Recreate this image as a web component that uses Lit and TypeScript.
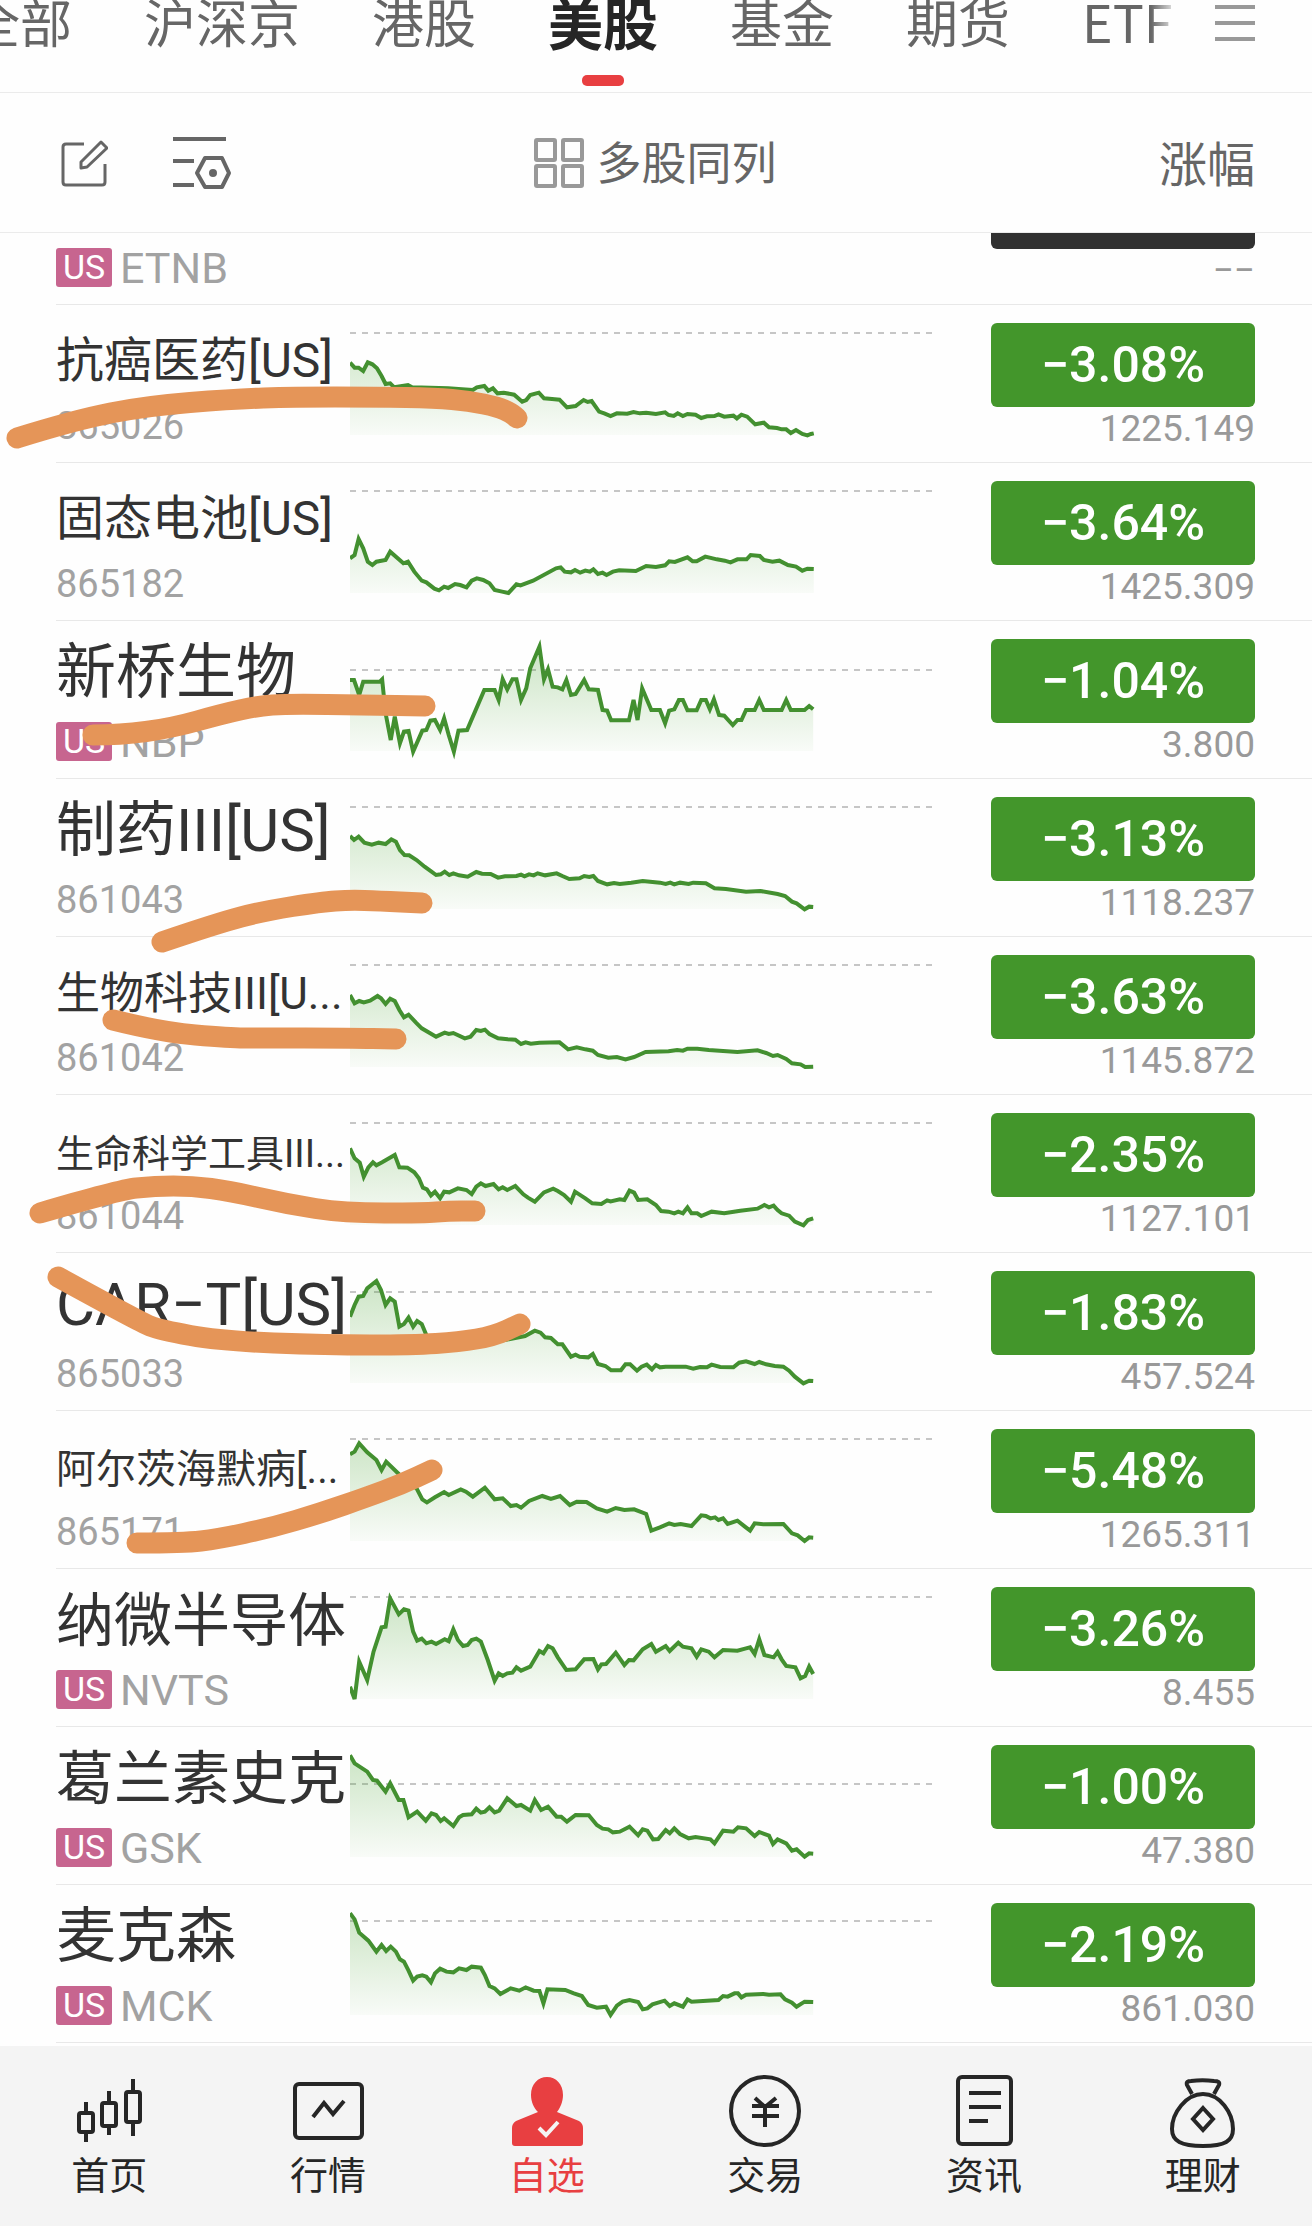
import { LitElement, html, css, svg, nothing } from "lit";
import { customElement, property } from "lit/decorators.js";

interface Quote {
  name: string;
  size: string;
  code: string;
  us?: boolean;
  change: string;
  price: string;
  /** Distance of the previous-close line from the top of the row. */
  close: number;
  /** Top-left corner of the chart's coordinate space. */
  origin: [number, number];
  line: string;
}

const QUOTES: Quote[] = [
  {
    name: "抗癌医药[US]", size: "m", code: "865026", change: "−3.08%", price: "1225.149", close: 28, origin: [0, 0],
    line: "0,173 8,188 15,188 23,198 31,172 39,178 47,190 55,213 62,237 70,235 77,247 101,240 108,247 171,250 195,253 214,255 221,247 234,243 241,257 249,250 257,265 268,263 286,269 300,290 307,285 314,270 329,263 338,280 352,282 365,284 378,307 393,303 407,285 414,291 421,288 434,320 443,325 454,333 465,325 483,326 494,321 505,325 516,323 533,327 549,322 555,330 564,333 571,325 580,333 588,327 602,329 612,339 622,334 635,333 642,328 652,335 668,332 674,340 682,329 692,335 706,358 721,353 730,367 744,369 752,373 760,373 768,384 777,375 788,387 797,391 803,387 808,385",
  },
  {
    name: "固态电池[US]", size: "m", code: "865182", change: "−3.64%", price: "1425.309", close: 28, origin: [0, 0],
    line: "0,286 8,276 15,228 23,256 31,296 39,306 46,296 62,291 70,266 93,301 101,296 112,326 125,353 133,358 147,377 155,382 164,371 171,375 183,363 192,366 203,373 212,353 221,346 232,351 243,361 252,381 265,386 276,390 290,364 297,367 319,353 359,316 367,313 374,326 385,328 392,321 401,329 410,323 418,326 424,319 432,333 440,329 447,336 458,326 469,322 498,324 516,309 533,312 549,307 556,295 566,297 588,283 597,295 604,295 619,281 639,289 653,293 663,298 675,289 691,289 698,276 714,279 721,291 736,296 748,293 763,306 777,311 788,323 797,317 808,318",
  },
  {
    name: "新桥生物", size: "xl", code: "NBP", us: true, change: "−1.04%", price: "3.800", close: 49, origin: [610, 3],
    line: "610,180 617,180 626,225 633,185 662,185 666,178 672,280 681,360 688,290 697,370 704,335 712,333 720,395 736,332 743,330 750,302 758,300 767,330 774,295 782,345 791,395 799,332 814,330 844,210 862,210 869,240 876,178 884,208 893,178 900,178 908,240 917,205 924,145 940,80 948,178 955,148 963,200 972,202 980,208 987,180 995,225 1003,222 1018,180 1026,208 1042,210 1050,270 1058,272 1065,301 1096,301 1104,240 1111,300 1119,205 1127,238 1135,270 1150,270 1159,310 1166,272 1175,268 1183,240 1190,240 1198,271 1214,271 1222,240 1230,240 1237,268 1244,238 1253,285 1262,287 1277,315 1285,300 1292,300 1300,270 1315,270 1323,240 1331,270 1362,270 1370,240 1378,270 1402,270 1410,258 1417,268",
  },
  {
    name: "制药III[US]", size: "xl", code: "861043", change: "−3.13%", price: "1118.237", close: 28, origin: [610, 477],
    line: "610,648 617,660 625,650 635,668 648,674 660,668 672,672 682,658 690,665 697,690 705,705 713,706 726,720 740,740 752,755 760,765 768,763 775,755 783,765 790,760 800,766 815,770 830,756 840,761 855,762 868,773 880,769 900,768 908,764 914,769 922,763 930,766 937,760 950,766 970,760 980,768 992,777 1010,775 1018,768 1027,771 1034,768 1042,783 1058,793 1070,789 1080,792 1100,788 1120,783 1150,788 1160,792 1168,788 1175,793 1185,788 1200,792 1208,788 1230,790 1245,805 1265,807 1300,815 1325,813 1355,822 1368,828 1380,845 1388,850 1402,868 1410,860 1417,861",
  },
  {
    name: "生物科技III[U...", size: "s", code: "861042", change: "−3.63%", price: "1145.872", close: 28, origin: [610, 21],
    line: "610,195 618,220 626,213 634,217 645,212 658,198 664,205 672,222 680,206 688,213 696,240 704,262 712,254 725,278 735,295 760,320 775,308 782,312 790,309 810,325 820,320 830,300 838,303 845,299 853,312 868,325 885,328 898,329 908,342 916,337 925,341 940,338 975,337 990,358 1005,352 1020,358 1033,362 1042,375 1060,383 1075,381 1090,388 1105,381 1125,366 1165,364 1180,360 1190,362 1198,356 1215,356 1235,360 1285,366 1320,361 1335,369 1347,378 1355,375 1370,387 1380,400 1395,403 1403,411 1417,410",
  },
  {
    name: "生命科学工具III...", size: "xxs", code: "861044", change: "−2.35%", price: "1127.101", close: 28, origin: [610, 495],
    line: "610,655 618,685 627,698 634,740 642,712 650,697 656,706 666,697 678,685 688,675 696,712 710,713 722,727 730,745 737,773 744,778 751,796 758,785 767,805 774,785 783,787 798,775 813,780 822,792 830,770 838,760 846,768 860,762 869,778 876,772 884,780 898,768 912,793 920,803 932,815 948,787 964,776 972,783 983,795 995,815 1002,785 1020,805 1032,820 1048,822 1058,811 1064,814 1080,808 1088,810 1097,782 1105,788 1112,810 1128,808 1143,825 1152,843 1165,845 1175,850 1182,845 1190,850 1198,832 1205,850 1215,850 1222,858 1240,845 1262,850 1290,842 1320,836 1332,825 1340,832 1348,827 1355,840 1362,850 1375,857 1385,875 1400,886 1408,870 1417,865",
  },
  {
    name: "CAR−T[US]", size: "xl", code: "865033", change: "−1.83%", price: "457.524", close: 39, origin: [610, 9],
    line: "610,200 618,165 625,140 633,138 640,115 656,93 664,120 672,165 680,145 688,155 696,230 704,222 712,203 720,230 727,213 735,222 743,255 770,275 830,280 880,270 915,258 932,242 942,248 950,262 960,264 972,283 980,283 995,320 1003,314 1010,320 1025,322 1033,312 1042,342 1055,348 1065,361 1082,361 1090,343 1098,343 1110,362 1118,350 1127,344 1136,358 1143,345 1150,352 1160,350 1195,350 1208,356 1220,351 1232,352 1240,344 1255,351 1278,352 1288,338 1300,334 1315,342 1323,336 1335,343 1350,348 1365,350 1375,362 1385,380 1400,400 1410,392 1417,393",
  },
  {
    name: "阿尔茨海默病[...", size: "xs", code: "865171", change: "−5.48%", price: "1265.311", close: 28, origin: [610, 483],
    line: "610,613 618,605 626,580 640,607 656,630 665,660 673,635 695,672 712,700 726,715 736,748 744,757 758,742 774,726 782,735 803,718 812,725 824,740 845,713 862,748 876,745 890,768 900,765 908,773 922,753 945,738 960,747 976,738 993,765 1005,755 1022,756 1040,775 1058,785 1073,774 1088,780 1105,778 1126,792 1135,842 1150,832 1166,820 1175,825 1186,822 1205,828 1222,796 1230,798 1238,805 1246,802 1252,810 1260,805 1268,822 1285,812 1298,830 1307,842 1315,820 1330,823 1365,822 1380,850 1390,856 1402,873 1410,862 1417,863",
  },
  {
    name: "纳微半导体", size: "l", code: "NVTS", us: true, change: "−3.26%", price: "8.455", close: 28, origin: [610, -3],
    line: "610,350 618,387 626,275 640,330 651,245 665,172 672,170 680,85 695,133 704,118 712,122 720,185 727,212 735,206 743,220 752,215 760,222 775,208 782,214 790,178 798,210 807,228 815,225 822,210 830,206 838,215 850,270 862,332 869,310 876,318 884,310 893,308 900,292 908,302 924,290 940,243 947,250 955,228 963,235 972,262 987,300 1003,298 1018,268 1034,267 1042,298 1048,283 1056,282 1073,248 1088,285 1096,270 1104,271 1120,238 1135,222 1143,245 1160,228 1167,243 1182,218 1190,230 1205,235 1214,260 1222,238 1235,245 1245,262 1260,240 1285,242 1300,235 1307,232 1315,252 1323,208 1332,255 1348,262 1355,246 1362,268 1370,288 1386,292 1395,325 1403,318 1410,290 1417,312",
  },
  {
    name: "葛兰素史克", size: "l", code: "GSK", us: true, change: "−1.00%", price: "47.380", close: 57, origin: [610, 471],
    line: "610,556 618,580 640,605 650,630 657,632 672,665 680,640 695,690 703,690 712,742 727,725 742,752 752,730 760,735 768,753 774,745 790,768 800,742 807,735 822,733 830,716 838,728 845,725 853,712 862,727 870,722 884,685 900,708 908,705 924,722 932,690 943,720 955,710 970,740 978,740 988,755 1003,735 1026,736 1040,765 1050,776 1060,778 1068,787 1080,785 1097,770 1112,796 1120,778 1128,782 1138,808 1147,807 1160,780 1167,790 1175,775 1185,792 1200,805 1212,801 1238,808 1245,820 1260,782 1278,785 1286,772 1300,775 1315,798 1323,786 1340,797 1347,822 1355,808 1370,820 1380,842 1388,838 1402,860 1410,850 1417,851",
  },
  {
    name: "麦克森", size: "xl", code: "MCK", us: true, change: "−2.19%", price: "861.030", close: 36, origin: [610, 15],
    line: "610,100 618,118 626,158 642,182 656,215 665,195 673,213 681,200 690,215 697,238 704,245 712,272 720,302 727,290 736,286 743,290 751,307 758,280 767,266 778,275 790,277 800,265 813,270 822,260 838,263 845,285 853,318 862,325 872,342 890,325 905,332 916,322 930,332 940,333 947,370 954,328 985,330 1000,340 1014,348 1025,375 1040,383 1056,380 1064,405 1075,377 1085,365 1097,360 1112,366 1120,388 1128,385 1137,373 1158,362 1167,378 1175,370 1190,380 1198,358 1205,365 1252,360 1260,348 1268,350 1280,340 1286,340 1292,352 1300,344 1330,342 1340,344 1360,343 1368,358 1380,368 1388,380 1402,365 1417,366",
  },
];

/** Hand-drawn highlighter strokes, as the points that the pen went through. */
const MARKS: [number, number][][] = [
  [[17, 438], [75, 420], [146, 406], [234, 399], [293, 397], [377, 397], [435, 398], [469, 401], [498, 407], [511, 413], [517, 418]],
  [[93, 735], [120, 735], [172, 728], [222, 714], [258, 706], [287, 704], [367, 705], [425, 706]],
  [[162, 942], [218, 923], [264, 911], [321, 902], [350, 900], [379, 901], [422, 903]],
  [[113, 1020], [161, 1032], [230, 1038], [258, 1038], [350, 1038], [396, 1039]],
  [[40, 1213], [118, 1190], [155, 1186], [192, 1186], [230, 1191], [287, 1204], [344, 1213], [425, 1213], [448, 1211], [475, 1211]],
  [[58, 1277], [140, 1322], [160, 1330], [221, 1341], [327, 1345], [413, 1345], [459, 1342], [494, 1336], [520, 1324]],
  [[137, 1543], [184, 1543], [218, 1539], [270, 1528], [321, 1513], [367, 1497], [402, 1484], [432, 1470]],
];

/** Joins points by quadratic curves that meet at the midpoints. */
function smooth(points: [number, number][]): string {
  let d = `M${points[0][0]} ${points[0][1]}`;
  for (let i = 1; i < points.length - 1; i++) {
    const [x, y] = points[i];
    const [nx, ny] = points[i + 1];
    d += ` Q${x} ${y} ${(x + nx) / 2} ${(y + ny) / 2}`;
  }
  const [lx, ly] = points[points.length - 1];
  return `${d} L${lx} ${ly}`;
}

const TABS = ["全部", "沪深京", "港股", "美股", "基金", "期货", "ETF"];

const NAV = [
  {
    label: "首页",
    icon: svg`<rect x="6" y="39" width="14" height="19" rx="2"/><path d="M13 28v11M13 58v10"/>
      <rect x="29" y="29" width="14" height="23" rx="2"/><path d="M36 17v12M36 52v9"/>
      <rect x="53" y="18" width="14" height="30" rx="2"/><path d="M60 5v13M60 48v14"/>`,
  },
  {
    label: "行情",
    icon: svg`<rect x="3" y="10" width="67" height="54" rx="4"/><path d="M21 43 32 29l9 11 11-13"/>`,
  },
  {
    label: "自选",
    active: true,
    icon: svg`<path class="solid" d="M36 3c9 0 16 7 16 18 0 7-3 13-6 17l22 9c3 2 4 4 4 7v15c0 2-1 3-3 3H4c-2 0-3-1-3-3V54c0-3 1-5 4-7l22-9c-4-4-7-10-7-17C20 10 27 3 36 3z"/>
      <path class="tick" d="m28 54 7 7 12-13"/>`,
  },
  {
    label: "交易",
    icon: svg`<circle cx="36" cy="37" r="34"/><path d="m26 24 10 9 11-9M23 32h27M23 42h27M36 32v21"/>`,
  },
  {
    label: "资讯",
    icon: svg`<rect x="10" y="3" width="53" height="67" rx="4"/><path d="M21 19h32M21 33h32M21 47h19"/>`,
  },
  {
    label: "理财",
    icon: svg`<path d="M25 20 20 11c-1-3 1-4 4-4 8-1 15-1 23 0 4 0 6 1 5 4l-5 9"/>
      <path d="M36 20c17 0 30 19 30 35 0 12-8 17-30 17S5 67 5 55c0-16 14-35 31-35z"/>
      <path d="m36 34 10 11-10 11-10-11z"/>`,
  },
];

@customElement("spark-line")
export class SparkLine extends LitElement {
  @property({ attribute: false }) quote!: Quote;

  static styles = css`
    :host {
      display: block;
      min-width: 0;
    }
    .chart {
      display: block;
      width: 100%;
      height: 157px;
    }
    .line {
      fill: none;
      stroke: #439030;
      stroke-width: 4px;
      stroke-linejoin: miter;
      vector-effect: non-scaling-stroke;
    }
    .close {
      stroke: #c6c6c6;
      stroke-width: 2px;
      stroke-dasharray: 6 6;
      vector-effect: non-scaling-stroke;
    }
  `;

  render() {
    const { origin, line, close, name } = this.quote;
    const [x, y] = origin;
    const base = y + 390;
    const lastX = line.slice(line.lastIndexOf(" ") + 1).split(",")[0];
    const closeY = y + close * 3;
    return html`
      <svg class="chart" viewBox="${x} ${y} 1014 471" preserveAspectRatio="none" role="img" aria-label="${name} 分时走势">
        <defs>
          <linearGradient id="fade" gradientUnits="userSpaceOnUse" x1="0" x2="0" y1="${y + 70}" y2="${base}">
            <stop offset="0" stop-color="#43a02b" stop-opacity="0.28" />
            <stop offset="1" stop-color="#43a02b" stop-opacity="0.03" />
          </linearGradient>
        </defs>
        <line class="close" x1="${x}" x2="${x + 1014}" y1="${closeY}" y2="${closeY}" />
        <polygon fill="url(#fade)" points="${x},${base} ${line} ${lastX},${base}" />
        <polyline class="line" points="${line}" />
      </svg>
    `;
  }
}

@customElement("app-root")
export class AppRoot extends LitElement {
  static styles = css`
    :host {
      display: block;
      font-family: "Noto Sans CJK SC", "Noto Sans", sans-serif;
      color: #333;
      background: #fefefe;
    }
    * {
      box-sizing: border-box;
    }
    button {
      font: inherit;
      color: inherit;
      background: none;
      border: 0;
      margin: 0;
      padding: 0;
      cursor: pointer;
    }
    svg {
      display: block;
    }
    .page {
      position: relative;
      overflow: hidden;
    }

    .header {
      display: flex;
      height: 93px;
      border-bottom: 1px solid #ebebeb;
    }
    .tabs {
      flex: 1;
      min-width: 0;
      display: flex;
      gap: 72px;
      margin-left: -32px;
      overflow: hidden;
      mask-image: linear-gradient(to left, transparent, #000 28px);
    }
    .tab {
      flex: none;
      display: flex;
      flex-direction: column;
      justify-content: flex-end;
      align-items: center;
      gap: 24px;
      padding-bottom: 6px;
      font-size: 52px;
      line-height: 60px;
      color: #666;
      white-space: nowrap;
    }
    .tab::after {
      content: "";
      flex: none;
      width: 42px;
      height: 11px;
      border-radius: 5px;
    }
    .tab.active {
      font-size: 55px;
      font-weight: 700;
      color: #262626;
    }
    .tab.active::after {
      background: #e83f41;
    }
    .menu {
      flex: none;
      align-self: flex-start;
      margin: 4px 57px 0 36px;
    }

    .toolbar {
      display: grid;
      grid-template-columns: 1fr auto 1fr;
      align-items: center;
      height: 140px;
      padding: 0 57px 0 56px;
      border-bottom: 1px solid #ebebeb;
      color: #666;
      line-height: 60px;
    }
    .tools {
      display: flex;
      align-items: center;
      gap: 64px;
    }
    .multi {
      display: flex;
      align-items: center;
      gap: 12px;
      font-size: 45px;
    }
    .multi span,
    .sort {
      padding-bottom: 4px;
    }
    .sort {
      justify-self: end;
      font-size: 48px;
    }
    .stroke {
      fill: none;
      stroke: currentColor;
      stroke-width: 3px;
      stroke-linejoin: round;
    }
    .stroke.bold {
      stroke-width: 4px;
    }
    .stroke.pale {
      stroke: #999;
    }

    .list {
      list-style: none;
      margin: 0;
      padding: 0 0 3px;
      font-family: Roboto, "Noto Sans CJK SC", sans-serif;
    }
    .row {
      display: grid;
      grid-template-columns: 294px minmax(0, 1fr) 264px;
      margin-left: 56px;
      padding-right: 57px;
      height: 158px;
      border-bottom: 1px solid #e8e8e8;
    }
    .trend {
      margin-right: 59px;
    }
    .row.cut {
      height: 72px;
      align-content: end;
      align-items: end;
      overflow: hidden;
    }
    .row.cut .stock {
      grid-column: 1;
      padding-bottom: 8px;
    }
    .row.cut .figures {
      grid-column: 3;
      padding-top: 0;
      padding-bottom: 11px;
    }
    .name {
      font-size: 60px;
      line-height: 104px;
      height: 92px;
      white-space: nowrap;
    }
    .name span {
      line-height: 1;
    }
    .l { font-size: 58px; }
    .m { font-size: 48px; }
    .s { font-size: 44px; }
    .xs { font-size: 40px; }
    .xxs { font-size: 38px; }
    .meta {
      display: flex;
      align-items: center;
      gap: 8px;
      height: 57px;
      color: #a2a2a2;
    }
    .tag {
      width: 56px;
      height: 39px;
      border-radius: 3px;
      background: #c7658f;
      color: #fff;
      font-size: 34px;
      line-height: 39px;
      text-align: center;
    }
    .code {
      font-size: 38px;
      line-height: 44px;
    }
    .code.ticker {
      font-size: 43px;
    }
    .figures {
      display: flex;
      flex-direction: column;
      padding-top: 18px;
    }
    .badge {
      height: 84px;
      border-radius: 6px;
      background: #43962b;
      color: #fff;
      font-size: 50px;
      font-weight: 500;
      line-height: 84px;
      text-align: center;
    }
    .badge.halted {
      background: #313131;
    }
    .price {
      font-size: 37px;
      line-height: 44px;
      text-align: right;
      color: #999;
    }

    .marks {
      position: absolute;
      inset: 0;
      width: 100%;
      height: 100%;
      pointer-events: none;
    }
    .marks path {
      fill: none;
      stroke: #e59558;
      stroke-width: 21px;
      stroke-linecap: round;
      stroke-linejoin: round;
    }

    .nav {
      display: grid;
      grid-template-columns: repeat(6, 1fr);
      height: 180px;
      padding-top: 28px;
      background: #f4f4f4;
    }
    .item {
      display: flex;
      flex-direction: column;
      align-items: center;
      gap: 5px;
      font-size: 38px;
      line-height: 44px;
      color: #262626;
      text-decoration: none;
    }
    .item.active {
      color: #e83f41;
    }
    .icon {
      overflow: visible;
      fill: none;
      stroke: currentColor;
      stroke-width: 4px;
    }
    .icon .solid {
      fill: currentColor;
      stroke: none;
    }
    .icon .tick {
      stroke: #f4f4f4;
    }
  `;

  private row(q: Quote) {
    return html`
      <li class="row">
        <div class="stock">
          <div class="name"><span class="${q.size}">${q.name}</span></div>
          <div class="meta">
            ${q.us ? html`<span class="tag">US</span>` : nothing}
            <span class="code ${q.us ? "ticker" : ""}">${q.code}</span>
          </div>
        </div>
        <spark-line class="trend" .quote=${q}></spark-line>
        <div class="figures">
          <div class="badge">${q.change}</div>
          <div class="price">${q.price}</div>
        </div>
      </li>
    `;
  }

  render() {
    return html`
      <div class="page">
        <header class="header">
          <div class="tabs">
            ${TABS.map((t) => html`<button class="tab ${t === "美股" ? "active" : ""}">${t}</button>`)}
          </div>
          <button class="menu" aria-label="更多">
            <svg class="stroke bold pale" width="40" height="38" viewBox="0 0 40 38">
              <path d="M0 3h40M0 19h40M0 35h40" />
            </svg>
          </button>
        </header>

        <div class="toolbar">
          <div class="tools">
            <button aria-label="编辑">
              <svg class="stroke" width="52" height="48" viewBox="-4 0 52 48">
                <path d="M24 5H6c-2 0-3 1-3 3v35c0 2 1 3 3 3h36c2 0 3-1 3-3V25" />
                <path d="M21 29v-6L41 3l6 6-20 19z" />
              </svg>
            </button>
            <button aria-label="设置">
              <svg class="stroke bold" width="60" height="56" viewBox="0 0 60 56">
                <path d="M1 4h53M1 26h21M1 50h21M25 38l8-15h17l7 15-7 14H33z" />
                <circle cx="41" cy="38" r="2" />
              </svg>
            </button>
          </div>
          <button class="multi">
            <svg class="stroke bold pale" width="50" height="50" viewBox="0 0 50 50">
              <rect x="2" y="2" width="19" height="20" rx="1" />
              <rect x="29" y="2" width="19" height="20" rx="1" />
              <rect x="2" y="28" width="19" height="20" rx="1" />
              <rect x="29" y="28" width="19" height="20" rx="1" />
            </svg>
            <span>多股同列</span>
          </button>
          <button class="sort">涨幅</button>
        </div>

        <ul class="list">
          <li class="row cut">
            <div class="stock">
              <div class="meta">
                <span class="tag">US</span>
                <span class="code ticker">ETNB</span>
              </div>
            </div>
            <div class="figures">
              <div class="badge halted"></div>
              <div class="price">−−</div>
            </div>
          </li>
          ${QUOTES.map((q) => this.row(q))}
        </ul>

        <nav class="nav">
          ${NAV.map(
            (n) => html`
              <a class="item ${n.active ? "active" : ""}" href="#">
                <svg class="icon" width="72" height="72" viewBox="0 0 72 72">${n.icon}</svg>
                <span>${n.label}</span>
              </a>
            `
          )}
        </nav>

        <svg class="marks" viewBox="0 0 1312 2226" preserveAspectRatio="none" aria-hidden="true">
          ${MARKS.map((m) => svg`<path d="${smooth(m)}"/>`)}
        </svg>
      </div>
    `;
  }
}
